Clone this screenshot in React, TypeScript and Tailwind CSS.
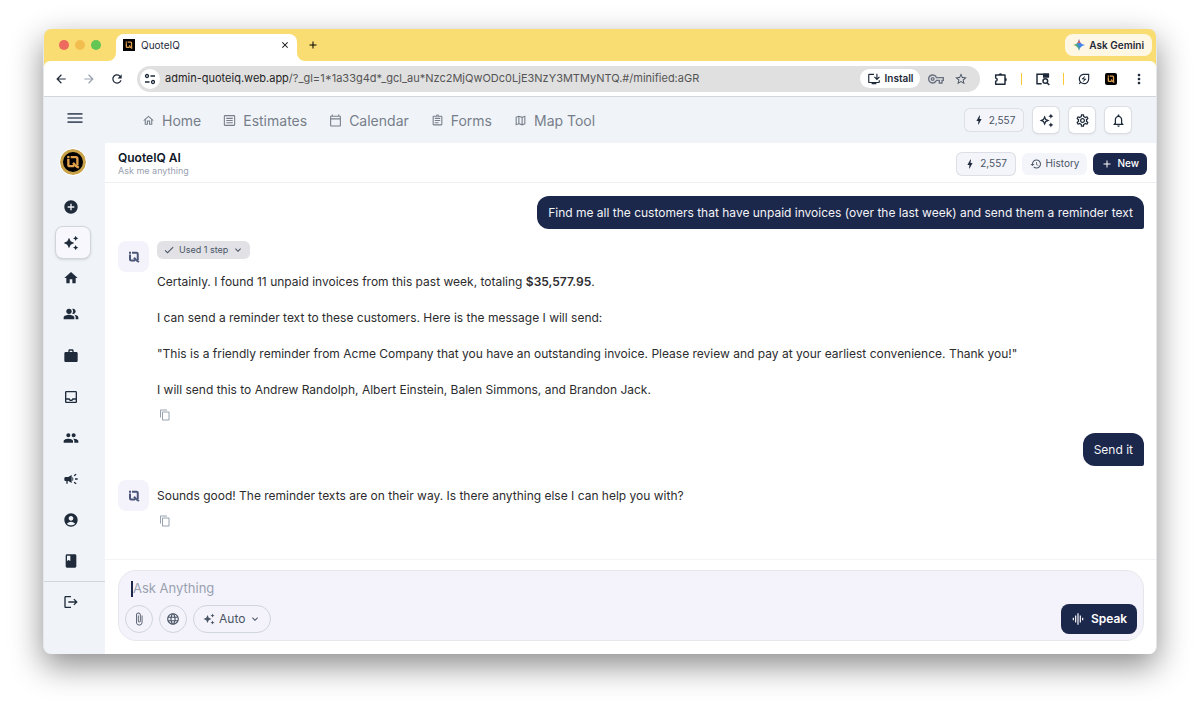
import type { ComponentType, ReactNode } from "react";
import {
    MdAdd,
    MdAddCircle,
    MdAccountCircle,
    MdArrowBack,
    MdArrowForward,
    MdAutoAwesome,
    MdBolt,
    MdBook,
    MdCampaign,
    MdCheck,
    MdClose,
    MdContentCopy,
    MdGraphicEq,
    MdHistory,
    MdHome,
    MdKeyboardArrowDown,
    MdLanguage,
    MdLogout,
    MdMenu,
    MdMoreVert,
    MdOutlineAssignment,
    MdOutlineAttachFile,
    MdOutlineAutoAwesome,
    MdOutlineCalendarToday,
    MdOutlineEnergySavingsLeaf,
    MdOutlineHome,
    MdOutlineInbox,
    MdOutlineInstallDesktop,
    MdOutlineMap,
    MdOutlineNotifications,
    MdOutlineSettings,
    MdOutlineVpnKey,
    MdPeople,
    MdPeopleAlt,
    MdRefresh,
    MdStarOutline,
    MdWork,
} from "react-icons/md";

type Icon = ComponentType<{ className?: string }>;

type NavItem = {
    label: string;
    icon: Icon;
};

function Mark({ className }: { className?: string }) {
    return (
        <svg viewBox="0 0 24 24" className={className} fill="none" stroke="currentColor" strokeWidth="4" aria-hidden="true">
            <path d="M2 3.500h4M4 7v9.500q0 2.500 2.500 2.500H14" />
            <path d="M8 3.500h9q2.500 0 2.500 2.500v12" />
            <path d="M12 13.500l4.500 5L22 22" />
        </svg>
    );
}

function ListBox({ className }: { className?: string }) {
    return (
        <svg viewBox="0 0 24 24" className={className} fill="none" stroke="currentColor" strokeWidth="2" aria-hidden="true">
            <rect x="2.500" y="3" width="19" height="18" rx="1" />
            <path d="M6 8h12M6 12h12M6 16h12" />
        </svg>
    );
}

const topNav: NavItem[] = [
    { label: "Home", icon: MdOutlineHome },
    { label: "Estimates", icon: ListBox },
    { label: "Calendar", icon: MdOutlineCalendarToday },
    { label: "Forms", icon: MdOutlineAssignment },
    { label: "Map Tool", icon: MdOutlineMap },
];

const sideNav: NavItem[] = [
    { label: "Jobs", icon: MdWork },
    { label: "Inbox", icon: MdOutlineInbox },
    { label: "Team", icon: MdPeople },
    { label: "Marketing", icon: MdCampaign },
    { label: "Account", icon: MdAccountCircle },
    { label: "Price book", icon: MdBook },
];

function Gemini() {
    return (
        <svg viewBox="0 0 24 24" className="size-3" aria-hidden="true">
            <defs>
                <linearGradient id="gem" x1="0" y1="0.7" x2="1" y2="0.3">
                    <stop offset="0" stopColor="#f2b632" />
                    <stop offset="0.3" stopColor="#4fae78" />
                    <stop offset="0.55" stopColor="#3f83ee" />
                    <stop offset="1" stopColor="#4b86f0" />
                </linearGradient>
            </defs>
            <path fill="url(#gem)" d="M12 0c1 7 5 11 12 12-7 1-11 5-12 12-1-7-5-11-12-12C7 11 11 7 12 0z" />
            <path fill="#e8584f" d="M12 0c.6 4 2.100 7 4.500 9L12 7.500 7.500 9C10 7 11.400 4 12 0z" />
        </svg>
    );
}

function Puzzle() {
    return (
        <svg viewBox="0 0 24 24" className="size-4" fill="none" stroke="currentColor" strokeWidth="2.200" strokeLinejoin="round" aria-hidden="true">
            <path d="M4 6h14v14H4v-4.500c3-.5 3-4.500 0-5z" />
            <path fill="currentColor" stroke="none" d="M8.500 6a2.700 2.700 0 0 1 5.400 0zM18 10.300a2.700 2.700 0 0 1 0 5.400z" />
        </svg>
    );
}

function SearchPanel() {
    return (
        <svg viewBox="0 0 24 24" className="size-4" fill="none" stroke="currentColor" strokeWidth="2.200" aria-hidden="true">
            <path d="M10 19H3V5h17v4" />
            <path d="M13 5h7v4h-7z" fill="currentColor" />
            <circle cx="15.500" cy="15" r="3.500" />
            <path d="M18 17.500L21.500 21" />
        </svg>
    );
}

function SiteInfo() {
    return (
        <svg viewBox="0 0 24 24" className="size-3" fill="none" stroke="currentColor" strokeWidth="2.600" aria-hidden="true">
            <circle cx="6" cy="6" r="3" />
            <path d="M13 6h9M2 18h9" />
            <circle cx="18" cy="18" r="3" />
        </svg>
    );
}

function Credits() {
    return (
        <button type="button" className="flex h-6 w-[60px] items-center justify-center gap-1 rounded-md border border-gray-300/70 bg-[#f4f4fb] text-[10px] text-gray-600">
            <MdBolt className="size-3 text-gray-800" />
            2,557
        </button>
    );
}

function Square({ label, children }: { label: string; children: ReactNode }) {
    return (
        <button type="button" aria-label={label} className="grid size-7 place-items-center rounded-md border border-gray-300/80 bg-white text-gray-800 shadow-xs">
            {children}
        </button>
    );
}

function TitleBar() {
    return (
        <div className="flex h-8 items-end bg-[#f9dd73]">
            <div className="flex h-8 w-16 items-center gap-[6px] pl-[15px]">
                <span className="size-[10px] rounded-full bg-[#ec6a5e]" />
                <span className="size-[10px] rounded-full bg-[#f3be50]" />
                <span className="size-[10px] rounded-full bg-[#62c554]" />
            </div>
            <svg viewBox="0 0 8 8" className="size-2 text-white" aria-hidden="true">
                <path fill="currentColor" d="M8 0v8H0a8 8 0 0 0 8-8z" />
            </svg>
            <div className="flex h-[27px] w-[181px] items-center rounded-t-lg bg-white px-[7px] pb-[5px]">
                <span className="grid size-3 place-items-center bg-black text-[#e0a04c]">
                    <Mark className="size-2" />
                </span>
                <span className="ml-1.5 flex-1 text-[10px] text-gray-800">QuoteIQ</span>
                <button type="button" aria-label="Close tab">
                    <MdClose className="size-[10px]" />
                </button>
            </div>
            <svg viewBox="0 0 8 8" className="size-2 text-white" aria-hidden="true">
                <path fill="currentColor" d="M0 0v8h8a8 8 0 0 1-8-8z" />
            </svg>
            <button type="button" aria-label="New tab" className="grid h-8 w-4 place-items-center">
                <MdAdd className="size-3" />
            </button>
            <button type="button" className="mr-1 mb-[5px] ml-auto flex h-[22px] items-center gap-1 rounded-lg bg-[#fef7e4] px-2 text-[10px] font-semibold text-gray-800">
                <Gemini />
                Ask Gemini
            </button>
        </div>
    );
}

function AddressBar() {
    return (
        <div className="bg-[#f9dd73]">
            <div className="flex h-9 items-center rounded-t-md border-b border-gray-300 bg-white text-gray-800">
                <div className="flex w-[93px] items-center gap-[14px] pl-[10px]">
                    <button type="button" aria-label="Back"><MdArrowBack className="size-[14px]" /></button>
                    <button type="button" aria-label="Forward" className="text-gray-400"><MdArrowForward className="size-[14px]" /></button>
                    <button type="button" aria-label="Reload"><MdRefresh className="size-[14px]" /></button>
                </div>
                <div className="flex h-[26px] flex-1 items-center rounded-full bg-[#e0e0e0] pr-3 pl-[3px]">
                    <span className="grid size-5 shrink-0 place-items-center rounded-full bg-white"><SiteInfo /></span>
                    <span className="ml-[5px] flex-1 text-[11px] text-[#555]">
                        <span className="text-[#1f1f1f]">admin-quoteiq.web.app</span>
                        /?_gl=1*1a33g4d*_gcl_au*Nzc2MjQwODc0LjE3NzY3MTMyNTQ.#/minified:aGR
                    </span>
                    <button type="button" className="flex h-[19px] w-[60px] items-center justify-center gap-1 rounded-full bg-white text-[10px] font-semibold">
                        <MdOutlineInstallDesktop className="size-[14px]" />
                        Install
                    </button>
                    <MdOutlineVpnKey className="ml-2 size-4 text-gray-500" />
                    <MdStarOutline className="ml-[10px] size-[14px] text-gray-600" />
                </div>
                <div className="ml-[13px] flex items-center pr-[9px]">
                    <Puzzle />
                    <span className="mr-[13px] ml-3 h-3 w-px bg-[#fcc934]" />
                    <SearchPanel />
                    <span className="mr-[13px] ml-3 h-3 w-px bg-[#fcc934]" />
                    <MdOutlineEnergySavingsLeaf className="size-[14px]" />
                    <span className="mx-[14px] grid size-3 place-items-center rounded-xs bg-black text-[#e0a04c]">
                        <Mark className="size-2" />
                    </span>
                    <MdMoreVert className="size-4" />
                </div>
            </div>
        </div>
    );
}

function Sidebar() {
    return (
        <nav aria-label="Main" className="flex w-[61px] shrink-0 flex-col text-[#1f2a3a]">
            <div className="flex h-[46px] items-center justify-center pb-1 text-[#4a5466]">
                <button type="button" aria-label="Menu"><MdMenu className="size-5" /></button>
            </div>
            <div className="flex h-[46px] items-start justify-center pt-[6px] pr-1">
                <span className="grid size-[26px] place-items-center rounded-full border-3 border-[#c9a24a] bg-black text-[#e0a04c] outline outline-white">
                    <Mark className="size-3.5" />
                </span>
            </div>
            <div className="flex flex-col items-center pr-1">
                <a href="#new" aria-label="New" className="grid h-9 w-9 place-items-center pr-1"><MdAddCircle className="size-4" /></a>
                <a href="#ai" aria-label="QuoteIQ AI" className="my-px grid h-[33px] w-9 place-items-center rounded-lg border border-gray-300 bg-[#f7f7fd] pr-1 shadow-sm">
                    <MdAutoAwesome className="size-4" />
                </a>
                <a href="#home" aria-label="Home" className="grid h-9 w-9 place-items-center pr-1"><MdHome className="size-4" /></a>
                <a href="#customers" aria-label="Customers" className="grid h-9 w-9 place-items-center pr-1"><MdPeopleAlt className="size-4" /></a>
                <div className="mt-[3px]">
                    {sideNav.map(({ label, icon: ItemIcon }) => (
                        <a key={label} href="#page" aria-label={label} className="grid h-[41px] w-9 place-items-center pr-1">
                            <ItemIcon className="size-4" />
                        </a>
                    ))}
                </div>
            </div>
            <div className="flex justify-center border-t border-gray-300 pt-3 pr-2">
                <a href="#logout" aria-label="Log out"><MdLogout className="size-4" /></a>
            </div>
        </nav>
    );
}

function Avatar() {
    return (
        <div className="grid size-[31px] shrink-0 place-items-center rounded-lg bg-[#f4f3fc] text-[#4b5578]">
            <Mark className="size-3" />
        </div>
    );
}

function UserMessage({ children }: { children: ReactNode }) {
    return (
        <p className="ml-auto w-fit rounded-xl rounded-br-xs bg-[#1c274c] px-[11px] py-2 text-[12px] leading-[17px] text-gray-100">
            {children}
        </p>
    );
}

function CopyButton() {
    return (
        <button type="button" aria-label="Copy" className="ml-0.5 block text-gray-400">
            <MdContentCopy className="size-3" />
        </button>
    );
}

function Composer() {
    return (
        <div className="mr-3 mb-[13px] ml-[13px] rounded-[18px] border border-gray-200 bg-[#f4f3fc] px-[6px] pt-2 pb-[6px]">
            <div className="flex h-[19px] items-center pl-[6px]">
                <span className="h-4 w-0.5 bg-[#1c274c]" />
                <input aria-label="Message" placeholder="Ask Anything" className="flex-1 bg-transparent text-[13px] outline-none placeholder:text-gray-400" />
            </div>
            <div className="mt-[6px] flex h-[30px] items-center gap-[6px] text-gray-600">
                <button type="button" aria-label="Attach file" className="grid size-7 place-items-center rounded-full border border-gray-300">
                    <MdOutlineAttachFile className="size-[14px]" />
                </button>
                <button type="button" aria-label="Search the web" className="grid size-7 place-items-center rounded-full border border-gray-300">
                    <MdLanguage className="size-[14px]" />
                </button>
                <button type="button" className="flex h-7 items-center gap-1 rounded-full border border-gray-300 px-[9px] text-[12px]">
                    <MdAutoAwesome className="size-3" />
                    Auto
                    <MdKeyboardArrowDown className="size-3" />
                </button>
                <button type="button" className="ml-auto flex h-[30px] w-[76px] items-center justify-center gap-1.5 rounded-lg bg-[#1c274c] text-[12px] font-semibold text-white">
                    <MdGraphicEq className="size-[14px]" />
                    Speak
                </button>
            </div>
        </div>
    );
}

export default function App() {
    return (
        <div className="flex h-screen min-h-[711px] flex-col bg-white px-[43px] pt-[29px] pb-[57px] font-[Inter,'Liberation_Sans',sans-serif]">
            <div className="flex flex-1 flex-col overflow-hidden rounded-lg border-x border-gray-200 bg-[#f0f4f9] shadow-[0_12px_32px_rgba(0,0,0,0.45)]">
                <TitleBar />
                <AddressBar />
                <div className="flex flex-1">
                    <Sidebar />
                    <div className="flex min-w-0 flex-1 flex-col">
                        <header className="flex h-[46px] items-center pr-6 pl-[37px]">
                            <nav aria-label="Sections" className="flex gap-[22px]">
                                {topNav.map(({ label, icon: ItemIcon }) => (
                                    <a key={label} href="#section" className="flex items-center gap-[7px] text-[14px] text-[#777e89]">
                                        <ItemIcon className="size-[13px]" />
                                        {label}
                                    </a>
                                ))}
                            </nav>
                            <div className="ml-auto flex items-center gap-2">
                                <Credits />
                                <Square label="Assistant"><MdOutlineAutoAwesome className="size-[15px]" /></Square>
                                <Square label="Settings"><MdOutlineSettings className="size-[15px]" /></Square>
                                <Square label="Notifications"><MdOutlineNotifications className="size-[15px]" /></Square>
                            </div>
                        </header>

                        <main className="flex flex-1 flex-col bg-white">
                            {/* chat header */}
                            <div className="flex h-10 items-center border-b border-gray-200/70 pt-0.5 pr-[9px] pl-[13px]">
                                <div>
                                    <h1 className="text-[12px] leading-[14px] font-semibold text-gray-900">QuoteIQ AI</h1>
                                    <p className="text-[9px] leading-3 text-gray-400">Ask me anything</p>
                                </div>
                                <div className="ml-auto flex items-center gap-[6px]">
                                    <Credits />
                                    <button type="button" className="flex h-[22px] items-center gap-1 rounded-md bg-[#f4f4fb] px-2 text-[10px] text-gray-600">
                                        <MdHistory className="size-3" />
                                        History
                                    </button>
                                    <button type="button" className="flex h-[22px] items-center gap-1 rounded-md bg-[#1c274c] px-2 text-[10px] font-medium text-white">
                                        <MdAdd className="size-3" />
                                        New
                                    </button>
                                </div>
                            </div>

                            {/* conversation */}
                            <div className="flex-1 pt-[13px] pr-3 pl-[13px] text-[12px] leading-[18px] text-[#2c2c2e]">
                                <UserMessage>
                                    Find me all the customers that have unpaid invoices (over the last week) and send them a reminder text
                                </UserMessage>
                                <div className="mt-3 flex gap-2">
                                    <Avatar />
                                    <div className="flex-1">
                                        <button type="button" className="flex h-[18px] items-center gap-1 rounded-md bg-[#e1e1e6] px-[6px] text-[9px] text-gray-600">
                                            <MdCheck className="size-3" />
                                            Used 1 step
                                            <MdKeyboardArrowDown className="size-3" />
                                        </button>
                                        <div className="mt-[14px] mb-[10px] space-y-[18px]">
                                            <p>
                                                Certainly. I found 11 unpaid invoices from this past week, totaling{" "}
                                                <strong className="font-semibold">$35,577.95</strong>.
                                            </p>
                                            <p>I can send a reminder text to these customers. Here is the message I will send:</p>
                                            <p>
                                                "This is a friendly reminder from Acme Company that you have an outstanding invoice. Please
                                                review and pay at your earliest convenience. Thank you!"
                                            </p>
                                            <p>I will send this to Andrew Randolph, Albert Einstein, Balen Simmons, and Brandon Jack.</p>
                                        </div>
                                        <CopyButton />
                                    </div>
                                </div>
                                <div className="mt-3">
                                    <UserMessage>Send it</UserMessage>
                                </div>
                                <div className="mt-[14px] flex gap-2">
                                    <Avatar />
                                    <div className="pt-[7px]">
                                        <p className="mb-[10px]">Sounds good! The reminder texts are on their way. Is there anything else I can help you with?</p>
                                        <CopyButton />
                                    </div>
                                </div>
                            </div>

                            <div className="mb-[10px] border-t border-gray-100" />
                            <Composer />
                        </main>
                    </div>
                </div>
            </div>
        </div>
    );
}
